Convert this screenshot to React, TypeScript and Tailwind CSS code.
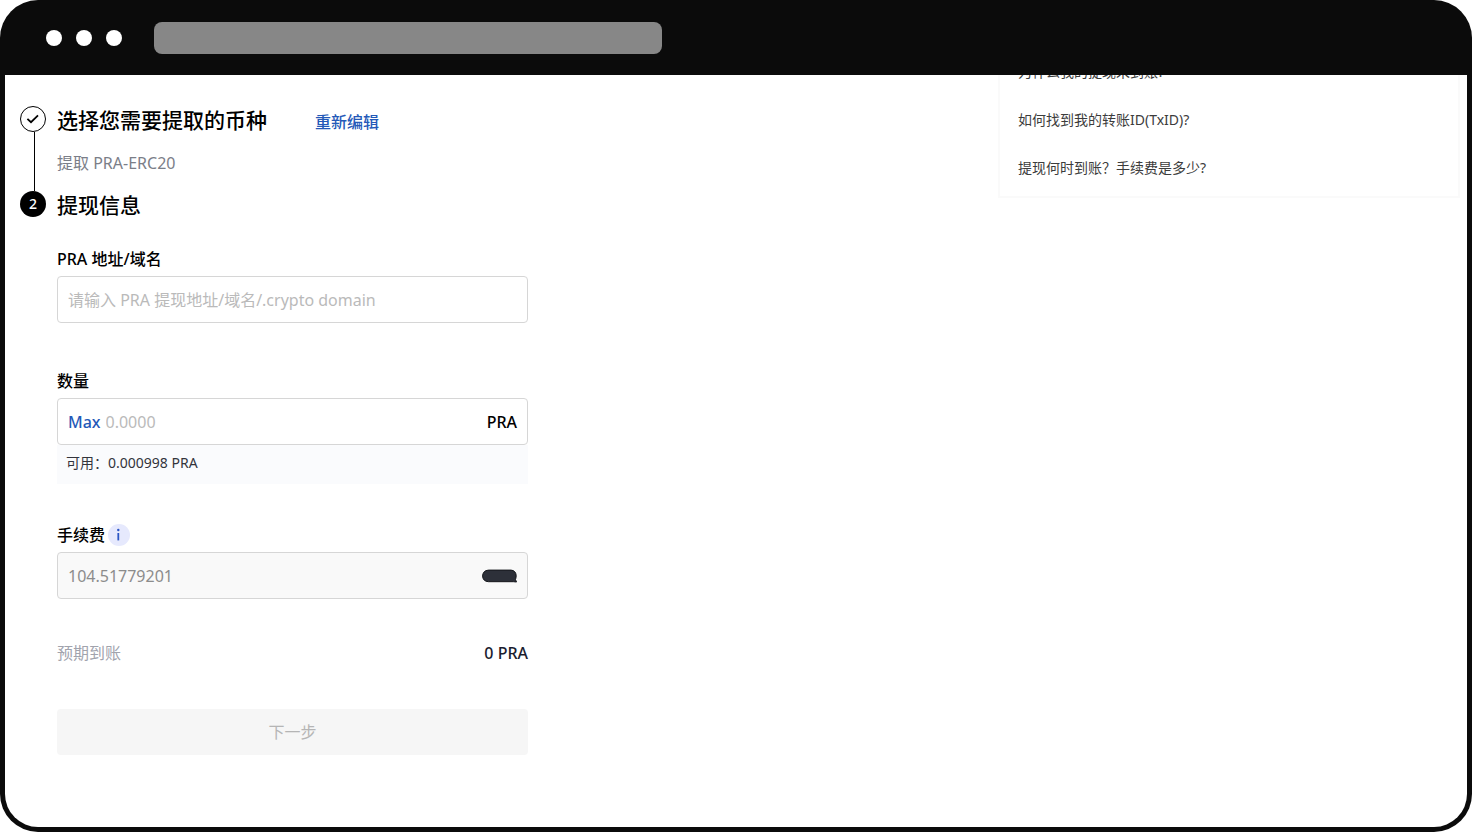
import type { ReactNode } from 'react'

const faqs = ['为什么我的提现未到账?', '如何找到我的转账ID(TxID)?', '提现何时到账？手续费是多少?']

function BrowserBar() {
  return (
    <header className="flex h-[75px] shrink-0 items-center pl-[41px]">
      <div className="flex gap-[14px]">
        <span className="size-4 rounded-full bg-white" />
        <span className="size-4 rounded-full bg-white" />
        <span className="size-4 rounded-full bg-white" />
      </div>
      <div className="ml-8 h-8 w-[508px] rounded-lg bg-[#878787]" />
    </header>
  )
}

function CheckIcon() {
  return (
    <svg className="size-4" viewBox="0 0 16 16" fill="none" stroke="currentColor" strokeWidth="1.8">
      <path d="M2.4 7.8 6 11.2 13 4.4" />
    </svg>
  )
}

function InfoIcon() {
  return (
    <svg className="size-[22px]" viewBox="0 0 22 22">
      <circle cx="11" cy="11" r="11" fill="#e6e9fd" />
      <circle cx="10.3" cy="6" r="1.2" fill="#2c56c4" />
      <path d="M10.300 9v7.400" stroke="#2c56c4" strokeWidth="1.8" />
    </svg>
  )
}

// 手续费币种遮挡
function HiddenCoin() {
  return (
    <svg className="h-[14px] w-[35px]" viewBox="0 0 35 14">
      <path
        d="M6.500 1.100H29C32.300 1.200 34.200 3.800 34.200 6.800 34.200 8.500 33.700 9.600 33.500 10.500L34.500 13 31.500 12.700H6.500C2.800 12.700.6 10.200.6 7S2.800 1.200 6.500 1.100Z"
        fill="#2d3039"
        stroke="#15171c"
        strokeWidth="1"
      />
    </svg>
  )
}

function Step({ icon, line, children }: { icon: ReactNode; line?: boolean; children: ReactNode }) {
  return (
    <li className="flex gap-[11px]">
      <div className="flex w-[26px] shrink-0 flex-col items-center">
        {icon}
        {line && <span className="ml-[2px] w-px grow bg-black" />}
      </div>
      <div className="min-w-0 grow">{children}</div>
    </li>
  )
}

function WithdrawForm() {
  return (
    <form className="mt-7 max-w-[471px]" onSubmit={(e) => e.preventDefault()}>
      <label htmlFor="address" className="block font-medium">
        PRA 地址/域名
      </label>
      <input
        id="address"
        type="text"
        placeholder="请输入 PRA 提现地址/域名/.crypto domain"
        className="mt-[5px] block h-[47px] w-full rounded border border-[#d6d6d6] px-[10px] outline-none placeholder:text-[#bababa]"
      />

      <label htmlFor="amount" className="mt-[46px] block font-medium">
        数量
      </label>
      <div className="mt-[5px] flex h-[47px] items-center rounded border border-[#d6d6d6] px-[10px]">
        <button type="button" className="font-medium text-[#2459b8]">
          Max
        </button>
        <input
          id="amount"
          type="text"
          placeholder="0.0000"
          className="ml-[5px] min-w-0 grow outline-none placeholder:text-[#bababa]"
        />
        <span className="font-medium">PRA</span>
      </div>
      <p className="h-[39px] bg-[#fafbfd] px-[9px] pt-2 text-sm text-[#33343c]">可用：0.000998 PRA</p>

      <div className="mt-[39px] flex h-6 items-center gap-[3px]">
        <label htmlFor="fee" className="font-medium">
          手续费
        </label>
        <button type="button" aria-label="手续费说明">
          <InfoIcon />
        </button>
      </div>
      <div className="mt-[5px] flex h-[47px] items-center rounded border border-[#d6d6d6] bg-[#f9f9f9] px-[10px]">
        <input
          id="fee"
          type="text"
          readOnly
          value="104.51779201"
          className="min-w-0 grow text-[#8c8c8c] outline-none"
        />
        <HiddenCoin />
      </div>

      <div className="mt-[42px] flex justify-between">
        <span className="text-[#a1a3ad]">预期到账</span>
        <span className="font-medium text-[#1b1d2e]">0 PRA</span>
      </div>

      <button type="submit" disabled className="mt-11 h-[46px] w-full rounded bg-[#f6f6f6] text-[#b5b5b5]">
        下一步
      </button>
    </form>
  )
}

export default function App() {
  return (
    <div
      lang="zh-CN"
      className="flex min-h-screen flex-col rounded-[38px] bg-[#0b0b0b] px-[5px] pb-[5px] font-['Noto_Sans','Noto_Sans_CJK_SC',sans-serif] text-base text-black"
    >
      <BrowserBar />

      <main className="flex grow items-start justify-between gap-8 overflow-hidden rounded-b-[33px] bg-white pr-[7px] pb-10 pl-[15px]">
        <ol className="grow pt-[31px]">
          <Step
            line
            icon={
              <span className="flex size-[26px] items-center justify-center rounded-full border border-black">
                <CheckIcon />
              </span>
            }
          >
            <div className="flex items-end gap-12">
              <h2 className="text-[21px] leading-7 font-medium">选择您需要提取的币种</h2>
              <a href="#edit" className="font-medium text-[#2459b8]">
                重新编辑
              </a>
            </div>
            <p className="mt-[17px] pb-4 text-[#7b7e88]">提取 PRA-ERC20</p>
          </Step>
          <Step
            icon={
              <span className="flex size-[26px] items-center justify-center rounded-full bg-black text-sm font-medium text-white">
                2
              </span>
            }
          >
            <h2 className="text-[21px] leading-7 font-medium">提现信息</h2>
            <WithdrawForm />
          </Step>
        </ol>

        {/* 常见问题 */}
        <aside className="-mt-[29px] w-[462px] shrink-0 border-2 border-[#fafafa] px-[18px] pb-1">
          <ul>
            {faqs.map((q) => (
              <li key={q} className="flex h-12 items-center text-sm text-[#3c3c3c]">
                <a href="#faq">{q}</a>
              </li>
            ))}
          </ul>
        </aside>
      </main>
    </div>
  )
}
